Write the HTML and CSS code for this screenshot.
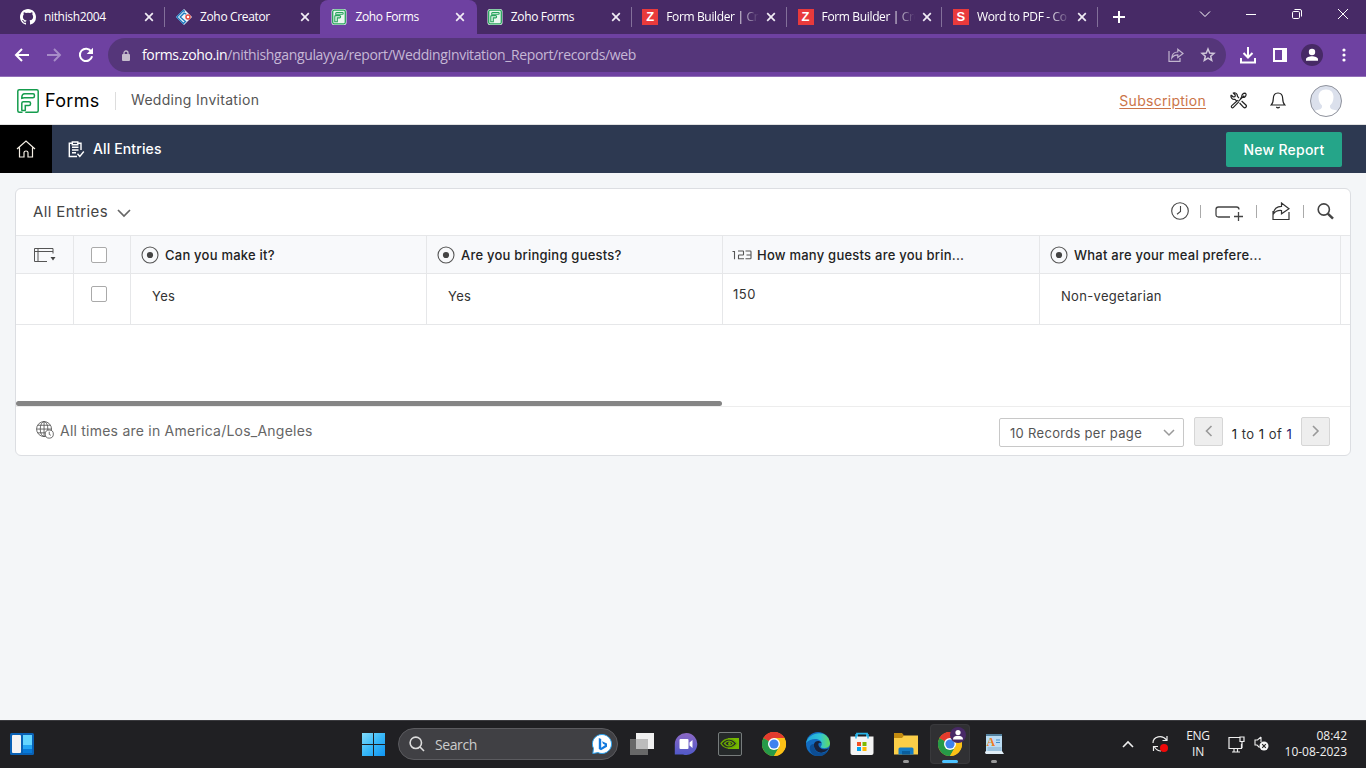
FILE: index.html
```html
<!DOCTYPE html>
<html lang="en">
<head>
<meta charset="utf-8">
<title>Zoho Forms</title>
<link rel="stylesheet" href="styles.css">
</head>
<body>
<svg width="0" height="0" class="defs">
  <defs>
    <symbol id="x" viewBox="0 0 10 10"><path d="M1.2 1.2l7.6 7.6M8.8 1.2L1.2 8.8" stroke="#f1ecf5" stroke-width="1.7" fill="none"/></symbol>
    <symbol id="forms-fav" viewBox="0 0 16 16"><rect width="15" height="16" rx="2.5" x=".5" fill="#e9f7ef"/><rect x="1.7" y="1.2" width="12.6" height="13.6" rx="1.5" fill="none" stroke="#27a35c" stroke-width="1.3"/><path d="M5.5 12.8H3.8V7.5Q3.8 6.6 4.7 6.6H8.6Q9.6 6.6 9.6 7.7T8.6 8.9H6.3v3.9zM5.6 3.5h5.8q.8 0 .8.9t-.8.9H4.6q0-1.8 1-1.8z" fill="none" stroke="#27a35c" stroke-width="1.1"/></symbol>
    <symbol id="radio" viewBox="0 0 18 18"><circle cx="9" cy="9" r="8" fill="none" stroke="#555" stroke-width="1.1"/><circle cx="9" cy="9" r="3.1" fill="#444"/></symbol>
    <symbol id="chrome" viewBox="0 0 24 24"><circle cx="12" cy="12" r="12" fill="#fbc116"/><path d="M12 12L1.6 6A12 12 0 0 1 22.4 6z" fill="#e33b2e"/><path d="M1.6 6A12 12 0 0 0 12 24l5.2-9L12 12z" fill="#269a48"/><path d="M12 6H22.4A12 12 0 0 1 12 24l5.2-9z" fill="#fbc116"/><path d="M1.6 6A12 12 0 0 1 22.4 6H12L7 9z" fill="#e33b2e"/><circle cx="12" cy="12" r="6" fill="#fff"/><circle cx="12" cy="12" r="4.6" fill="#3f82ee"/></symbol>
  </defs>
</svg>

<div class="tabs">
  <div class="tab"><svg class="fav" viewBox="0 0 16 16"><path fill="#fff" d="M8 0C3.58 0 0 3.58 0 8c0 3.54 2.29 6.53 5.47 7.59.4.07.55-.17.55-.38v-1.5c-2.01.37-2.53-.49-2.69-.94-.09-.23-.48-.94-.82-1.13-.28-.15-.68-.52-.01-.53.63-.01 1.08.58 1.23.82.72 1.21 1.87.87 2.33.66.07-.52.28-.87.51-1.07-1.78-.2-3.64-.89-3.64-3.95 0-.87.31-1.59.82-2.15-.08-.2-.36-1.02.08-2.12 0 0 .67-.21 2.2.82a7.6 7.6 0 0 1 4 0c1.53-1.04 2.2-.82 2.2-.82.44 1.1.16 1.92.08 2.12.51.56.82 1.27.82 2.15 0 3.07-1.87 3.75-3.65 3.95.29.25.54.73.54 1.48v2.2c0 .21.15.46.55.38A8 8 0 0 0 16 8c0-4.42-3.58-8-8-8z"/></svg><span class="tab-title">nithish2004</span><svg class="close"><use href="#x"/></svg></div>
  <div class="tab sep"><svg class="fav" viewBox="0 0 16 16"><path d="M8 0l8 8-8 8-8-8z" fill="#edf5fb"/><path d="M8.8 2.6L7.4 1.5.9 8l6.500 6.500L10 12M10.300 5.200L8 4.200 4.200 8l4.600 4" fill="none" stroke="#217bc0" stroke-width="1.400"/><circle cx="12" cy="8" r="2" fill="#fff" stroke="#e54b3f" stroke-width="1.500"/></svg><span class="tab-title">Zoho Creator</span><svg class="close"><use href="#x"/></svg></div>
  <div class="tab active"><svg class="fav"><use href="#forms-fav"/></svg><span class="tab-title">Zoho Forms</span><svg class="close"><use href="#x"/></svg></div>
  <div class="tab"><svg class="fav"><use href="#forms-fav"/></svg><span class="tab-title">Zoho Forms</span><svg class="close"><use href="#x"/></svg></div>
  <div class="tab sep"><span class="fav letter">Z</span><span class="tab-title fade">Form Builder | Cre</span><svg class="close"><use href="#x"/></svg></div>
  <div class="tab sep"><span class="fav letter">Z</span><span class="tab-title fade">Form Builder | Cre</span><svg class="close"><use href="#x"/></svg></div>
  <div class="tab sep"><span class="fav letter">S</span><span class="tab-title fade">Word to PDF - Co</span><svg class="close"><use href="#x"/></svg></div>
  <div class="new-tab sep"><svg width="12" height="12" viewBox="0 0 12 12"><path d="M6 0v12M0 6h12" stroke="#fff" stroke-width="2"/></svg></div>
  <div class="window-controls">
    <svg viewBox="0 0 12 12"><path d="M1 3.500l5 5 5-5" /></svg>
    <svg viewBox="0 0 12 12"><path d="M1 6.500h10"/></svg>
    <svg viewBox="0 0 12 12"><rect x="1.500" y="3.500" width="7" height="7" rx="1.200"/><path d="M3.500 1.500H9q1.500 0 1.500 1.500v5.500"/></svg>
    <svg viewBox="0 0 12 12"><path d="M1 1l10 10M11 1L1 11"/></svg>
  </div>
</div>

<div class="toolbar">
  <div class="nav-icons">
    <svg width="16" height="16" viewBox="0 0 16 16"><path d="M15 8H2.500M8 2L2 8l6 6" stroke="#fff" stroke-width="2" fill="none"/></svg>
    <svg width="16" height="16" viewBox="0 0 16 16"><path d="M1 8h12.500M8 2l6 6-6 6" stroke="#a78cc8" stroke-width="1.900" fill="none"/></svg>
    <svg width="16" height="16" viewBox="0 0 16 16"><path d="M13.300 4.500A6.200 6.200 0 1 0 14.100 9.300" stroke="#fff" stroke-width="2" fill="none"/><path d="M15 .8v6.300H8.700z" fill="#fff"/></svg>
  </div>
  <div class="omnibox">
    <svg width="8" height="11" viewBox="0 0 8 11"><path d="M2 4.500V3a2 2 0 0 1 4 0v1.500" fill="none" stroke="#c5bccd" stroke-width="1.300"/><rect y="4" width="8" height="7" rx="1" fill="#c5bccd"/></svg>
    <span class="url"><b>forms.zoho.in</b>/nithishgangulayya/report/WeddingInvitation_Report/records/web</span>
    <svg width="16" height="16" viewBox="0 0 16 16" fill="none" stroke="#c2b5cf" stroke-width="1.200"><path d="M1 4v10.300h11V11M3.800 11c.2-4 2.400-6 6-6V2.200L15 6.500l-5.200 4V7.800C7 7.800 5.300 8.600 3.800 11z"/></svg>
    <svg width="16" height="16" viewBox="0 0 16 16"><path d="M8 2l1.700 4 4.300.4-3.300 2.800 1 4.300L8 11.200l-3.700 2.300 1-4.300L2 6.400 6.300 6z" fill="none" stroke="#d0c7da" stroke-width="1.500"/></svg>
  </div>
  <div class="tool-icons">
    <svg width="16" height="17" viewBox="0 0 16 17"><path d="M1 11v4.500h14V11M8 0v10M3.500 6L8 10.500 12.500 6" fill="none" stroke="#fff" stroke-width="2"/></svg>
    <svg width="14" height="14" viewBox="0 0 14 14"><path d="M1 1h12v12H1z" fill="none" stroke="#fff" stroke-width="2"/><path d="M9 1h4v12H9z" fill="#fff"/></svg>
    <svg width="22" height="22" viewBox="0 0 22 22"><circle cx="11" cy="11" r="11" fill="#472a66"/><circle cx="11" cy="8" r="3.200" fill="#fff"/><path d="M5 16.800v-1.500c0-2 3.500-3 6-3s6 1 6 3v1.500z" fill="#fff"/></svg>
    <svg width="4" height="14" viewBox="0 0 4 14" fill="#fff"><circle cx="2" cy="2" r="1.600"/><circle cx="2" cy="7" r="1.600"/><circle cx="2" cy="12" r="1.600"/></svg>
  </div>
</div>

<header class="app-header">
  <svg width="22" height="24" viewBox="0 0 22 24" fill="none" stroke="#159c4d" stroke-width="1.500"><path d="M5.500 23.200H2.300Q.8 23.200.8 21.700V2.300Q.8.800 2.300.8h17.400q1.500 0 1.500 1.500v19.400q0 1.500-1.500 1.500H8.300"/><path d="M4.800 21V14.300q0-1.500 1.500-1.500h5.700q1.500 0 1.500 1.500v.8q0 1.500-1.500 1.500H8.300V21q0 .5-.5.500H5.300q-.5 0-.5-.5zM4.800 9.300q-.2-4.500 3-4.500h8.400q1.200 0 1.200 1.200v1.300q0 1.500-1.500 1.500H7.300q-1.200 0-2.500.5z"/></svg>
  <span class="brand">Forms</span>
  <span class="form-name">Wedding Invitation</span>
  <a class="subscription">Subscription</a>
  <svg class="tools" width="17" height="17" viewBox="0 0 17 17" fill="none" stroke="#222" stroke-width="1.200" stroke-linejoin="round"><path d="M1.200 3L3.200 5 5 4.700 5.300 3 3.300 1C5.200.2 7.600 1.700 7.400 4.200l1.500 1.900M1.200 3C.2 5.500 2.500 7.900 5 7.300l2 2.100M9.600 11l4 4.300c1.600 1.300 3.700-.7 2.300-2.300L11.600 9M8.600 9.200L14.200 3.600M10.200 7.400l1.600-2.600c-.3-1.900 1.300-3.700 3.400-3.600l.9 1c0 2-1.600 3.600-3.500 3.100M7.800 8.200l-6 5.400c-1.300 1.300.4 2.900 1.600 1.700L9 9.700"/></svg>
  <svg class="bell" width="16" height="17" viewBox="0 0 16 17" fill="none" stroke="#222" stroke-width="1.200"><path d="M1.200 13h13.600c-2-1.700-2-3.700-2.100-6.500C12.600 3 10.800 1 8 1S3.400 3 3.300 6.500C3.200 9.300 3.200 11.300 1.200 13zM6.300 15q1.700 1.600 3.400 0"/></svg>
  <svg class="avatar" width="32" height="32" viewBox="0 0 32 32"><clipPath id="round"><circle cx="16" cy="16" r="15.500"/></clipPath><g clip-path="url(#round)"><path d="M0 0h32v32H0z" fill="#dbe0ec"/><path d="M16 4.500c-5 0-7.500 3-7.500 7.500 0 4 1.500 7 3.500 8.500.4 3-1.500 4-5 4.500C4.500 25.500 3 27 1 32h30c-2-5-3.500-6.500-6-7-3.500-.5-5.400-1.500-5-4.500 2-1.500 3.500-4.500 3.500-8.500 0-4.500-2.500-7.500-7.500-7.500z" fill="#fff"/></g><circle cx="16" cy="16" r="15.500" fill="none" stroke="#8f929c"/></svg>
</header>

<nav class="nav">
  <div class="home"><svg width="20" height="18" viewBox="0 0 20 18" fill="none" stroke="#f4eee4" stroke-width="1.200"><path d="M1 9l9-8 9 8M3.500 7.500V17H8v-4.500q0-1.500 2-1.500t2 1.500V17h4.500V7.500"/></svg></div>
  <svg class="clip" width="17" height="17" viewBox="0 0 17 17" fill="none" stroke="#fff" stroke-width="1.400"><path d="M4 2.300H1.300v13.200H9M10 2.300h3V9M4.300 1h5.500v2.700H4.300zM4 6.300h6.500M4 9h6.500M4 11.700h4M9.500 12.800l2.300 2.700 4-5"/></svg>
  <span class="nav-title">All Entries</span>
  <div class="new-report">New Report</div>
</nav>

<main class="card">
  <div class="card-top">
    <span class="view-name">All Entries</span>
    <svg class="chev" width="14" height="9" viewBox="0 0 14 9"><path d="M1 1l6 6 6-6" fill="none" stroke="#666" stroke-width="1.700"/></svg>
    <div class="actions">
      <svg width="18" height="18" viewBox="0 0 18 18" fill="none" stroke="#444" stroke-width="1.100"><circle cx="9" cy="9" r="8.300"/><path d="M9.500 4v5.500L6 12.300"/></svg>
      <i></i>
      <svg width="28" height="18" viewBox="0 0 28 18" fill="none" stroke="#444" stroke-width="1.300"><path d="M15 13H3.500Q1 13 1 10.500v-5Q1 3 3.500 3h18Q24 3 24 5.500M23.500 8v9M19 12.500h9"/></svg>
      <i></i>
      <svg width="18" height="18" viewBox="0 0 18 18" fill="none" stroke="#333" stroke-width="1.200"><path d="M2 9.500H1v8h16V10M1.500 12C1.500 7 5 4.300 9.500 4.300V1L17 6.800l-7.500 5V8.500C6 8.200 3.500 9 1.500 12z"/></svg>
      <i></i>
      <svg width="17" height="17" viewBox="0 0 17 17" fill="none" stroke="#444"><circle cx="6.800" cy="6.500" r="5.600" stroke-width="1.600"/><path d="M10.800 10.600l5.200 5" stroke-width="2.500"/></svg>
    </div>
  </div>
  <div class="grid head">
    <div class="center"><svg width="22" height="15" viewBox="0 0 22 15" fill="none" stroke="#555"><path d="M13 14.500H.500v-13h18.500v5M.500 4.500h18.500M4 1v13" /><path d="M16.500 10h5L19 13.500z" fill="#444" stroke="none"/></svg></div>
    <div class="center box"><span class="check"></span></div>
    <div class="col"><svg class="radio"><use href="#radio"/></svg>Can you make it?</div>
    <div class="col"><svg class="radio"><use href="#radio"/></svg>Are you bringing guests?</div>
    <div class="col number"><svg width="20" height="10" viewBox="0 0 20 10" fill="none" stroke="#555" stroke-width="1.100"><path d="M.5 1.500h2V9.300M6 1h5q.5 0 .5.500v3q0 .500-.5.500H7q-.5 0-.5.500v3.200h5.500M13.500 1h4.700q.8 0 .8.800v6.100q0 .8-.8.800h-4.700M14.500 5H19"/></svg>How many guests are you brin...</div>
    <div class="col"><svg class="radio"><use href="#radio"/></svg>What are your meal prefere...</div>
    <div></div>
  </div>
  <div class="grid row">
    <div></div>
    <div class="center box"><span class="check"></span></div>
    <div class="cell">Yes</div>
    <div class="cell">Yes</div>
    <div class="cell value">150</div>
    <div class="cell">Non-vegetarian</div>
    <div></div>
  </div>
  <div class="scroll-area"><div class="scrollbar"></div></div>
  <footer class="card-foot">
    <svg class="globe" width="18" height="18" viewBox="0 0 19 19" fill="none" stroke="#555" stroke-width=".9"><circle cx="8.500" cy="8.500" r="7.900"/><ellipse cx="8.500" cy="8.500" rx="4" ry="7.900"/><path d="M8.500.6v15.800M.6 8.500h15.800M2 4.500h13M2 12.500h11"/><circle cx="14" cy="13.800" r="4.300" fill="#fff"/><path d="M14 11.300v2.900l1.700.9"/></svg>
    <span class="times">All times are in America/Los_Angeles</span>
    <div class="select"><span>10 Records per page</span><svg width="12" height="8" viewBox="0 0 12 8"><path d="M1 1l5 5 5-5" fill="none" stroke="#999" stroke-width="1.500"/></svg></div>
    <div class="page-btn"><svg width="8" height="12" viewBox="0 0 8 12"><path d="M6.500 1l-5 5 5 5" fill="none" stroke="#999" stroke-width="1.600"/></svg></div>
    <span class="page-info"><b>1</b> to <b>1</b> of <b>1</b></span>
    <div class="page-btn"><svg width="8" height="12" viewBox="0 0 8 12"><path d="M1 1l5 5-5 5" fill="none" stroke="#999" stroke-width="1.600"/></svg></div>
  </footer>
</main>

<div class="taskbar">
  <svg class="widgets" width="24" height="22" viewBox="0 0 24 22"><rect width="24" height="22" rx="1.500" fill="#0961b5"/><rect x="2" y="2" width="9" height="18" rx="1" fill="#f4f4f4"/><path d="M13 2h9v10h-9z" fill="#63d5ff"/><path d="M13 12h9v4h-9z" fill="#22a5f4"/><path d="M13 16h9v4h-9z" fill="#0779d8"/></svg>
  <svg class="start" width="23" height="23" viewBox="0 0 23 23"><defs><linearGradient id="win" x1="0" y1="0" x2="1" y2="1"><stop stop-color="#82dcfb"/><stop offset=".5" stop-color="#38b8f8"/><stop offset="1" stop-color="#0f94f2"/></linearGradient></defs><path d="M0 0h11v11H0zM12 0h11v11H12zM0 12h11v11H0zM12 12h11v11H12z" fill="url(#win)"/></svg>
  <div class="search">
    <svg width="16" height="16" viewBox="0 0 16 16" fill="none" stroke="#ddd" stroke-width="1.600"><circle cx="6.800" cy="6.800" r="5.700"/><path d="M11 11l4 4"/></svg>
    <span>Search</span>
    <svg width="20" height="20" viewBox="0 0 20 20"><path d="M10 .5a9.500 9.500 0 1 1-4 18.100L.8 19.500l.7-5A9.500 9.500 0 0 1 10 .5z" fill="#fff" stroke="#2aa0ed"/><path d="M6.800 4l2.400 1v8.700l4-2.600-2.200-1.300L10 7.300l5 2.200v3.300L9 16.200 6.800 15z" fill="#1279de"/></svg>
  </div>
  <div class="apps">
    <div><svg width="24" height="22" viewBox="0 0 24 22"><path d="M6 0h18v16H6z" fill="#f0f0f0"/><path d="M0 6h18v16H0z" fill="#686868"/><path d="M6 6h12v10H6z" fill="#bcbcbc"/></svg></div>
    <div><svg width="24" height="24" viewBox="0 0 24 24"><defs><linearGradient id="chat" x2="0" y2="1"><stop stop-color="#8c68c4"/><stop offset="1" stop-color="#5059c9"/></linearGradient></defs><path d="M12.500 1A11 11 0 1 1 9 22.500H.8V12A11.500 11.500 0 0 1 12.500 1z" fill="url(#chat)"/><rect x="5.500" y="7" width="9" height="10" rx="1" fill="#fff"/><path d="M15.500 10.500l3-2.500v8l-3-2.500z" fill="#fff"/></svg></div>
    <div><svg width="24" height="24" viewBox="0 0 24 24"><rect x=".5" y=".5" width="23" height="23" rx="1.500" fill="#25292a" stroke="#777c7c"/><path d="M10 6h11v11H10z" fill="#76b900"/><path d="M3 11.500C7 6 14 5 19 11.500 15 17 7 18 3 11.500zM6.500 11.500c2.500-3 6-3.500 9 0-3 3-6 3.500-9 0z" fill="#232829" stroke="#6ba800" stroke-width="1.300"/><circle cx="11.500" cy="11.500" r="1.500" fill="#6ba800"/></svg></div>
    <div><svg width="24" height="24"><use href="#chrome"/></svg></div>
    <div><svg width="24" height="24" viewBox="0 0 24 24"><defs><linearGradient id="edge"><stop stop-color="#22a4df"/><stop offset=".6" stop-color="#2fc3d4"/><stop offset="1" stop-color="#65dc5b"/></linearGradient></defs><circle cx="12" cy="12" r="12" fill="#126bc0"/><path d="M0 11C2 0 22-4 24 11c.2 5-5 6-9 4.500-1-.5 1-1.500.8-4C15.500 6 5 5 0 11z" fill="url(#edge)"/><path d="M8 12c1-3 5-4.500 7.500-1-3-1-4 1-2.500 3.500 2 3.500 7 3.500 10 1.500-5 8-16 5-15-4z" fill="#18223b"/><path d="M8 12c-1 9 9 12 14 6C18 27 6 26 4 18c-1-4 1-6 4-6z" fill="#0c4d93"/></svg></div>
    <div><svg width="24" height="24" viewBox="0 0 24 24"><path d="M7 5V1.700h10V5" fill="none" stroke="#29b5ea" stroke-width="1.800"/><path d="M.5 4.500h23V21q0 2-2 2h-19q-2 0-2-2z" fill="#f4f4f4"/><path d="M6 6.500V2M18 6.500V2" stroke="#29b5ea" stroke-width="1.500"/><path d="M7 10h4v4H7z" fill="#f25022"/><path d="M12.500 10h4v4h-4z" fill="#7fba00"/><path d="M7 15h4v4H7z" fill="#00a4ef"/><path d="M12.500 15h4v4h-4z" fill="#ffb900"/></svg></div>
    <div class="running"><svg width="24" height="24" viewBox="0 0 24 24"><path d="M0 1h8l2 2.500V9H0z" fill="#c28a0f"/><path d="M0 6h8l2-2.500h14V22.500H0z" fill="#fbce48"/><path d="M4.500 22.500V17q0-1.500 1.500-1.500h12q1.500 0 1.500 1.500v5.500z" fill="#147bc4"/><path d="M8 19h8v3.500H8z" fill="#0a5e9d"/></svg></div>
    <div class="running current"><svg width="24" height="24"><use href="#chrome"/></svg><svg class="badge" width="16" height="16" viewBox="0 0 16 16"><circle cx="8" cy="8" r="8" fill="#482967"/><circle cx="8" cy="5.500" r="2.600" fill="#fff"/><path d="M3 12.500q0-3.700 5-3.700t5 3.700z" fill="#fff"/></svg></div>
    <div class="running"><svg width="20" height="24" viewBox="0 0 20 24"><path d="M2 2h16v19H2z" fill="#badcf3"/><path d="M2 2h16v2H2z" fill="#53819e"/><path d="M12 8h4M12 10.500h4" stroke="#418bca"/><path d="M3.500 16h14M3.500 18h14" stroke="#7ea9ca"/><path d="M2 19h16l2 3H2q-2-1.500 0-3z" fill="#e1eef7"/><text x="2.500" y="14" class="wordpad">A</text></svg></div>
  </div>
  <div class="tray">
    <svg width="12" height="8" viewBox="0 0 12 8"><path d="M1 7l5-5 5 5" fill="none" stroke="#eee" stroke-width="1.600"/></svg>
    <svg class="sync" width="17" height="18" viewBox="0 0 17 18" fill="none" stroke="#eee" stroke-width="1.200"><path d="M1 8C1 1.500 10-1 14.500 5M15 1v4.500h-4.500M9 16q-4 0-6.500-4M1.500 16v-4.500H6"/><circle cx="12" cy="13" r="4" fill="#f00808" stroke="none"/></svg>
    <div class="lang">ENG<br>IN</div>
    <svg class="monitor" width="17" height="17" viewBox="0 0 17 17" fill="none" stroke="#eee" stroke-width="1.200"><path d="M11.500 1.500H1v11h12.500V8M4 16h8M6 12.500V16M9.500 12.500V16M12 1h4v4.500h-4zM14 5.500V12"/></svg>
    <svg class="sound" width="16" height="16" viewBox="0 0 16 16" fill="none" stroke="#eee" stroke-width="1.100"><path d="M7 1L3.500 4H1v5h2l2.500 2.500M7 1v5"/><circle cx="10" cy="10" r="4.500" fill="#f5f5f5" stroke="none"/><path d="M8.200 8.200l3.600 3.600M11.800 8.200l-3.600 3.600" stroke="#222"/></svg>
    <div class="clock">08:42<br>10-08-2023</div>
  </div>
</div>
</body>
</html>
```
FILE: styles.css
```css
* { box-sizing: border-box; }
body {
  margin: 0;
  width: 1366px;
  height: 768px;
  overflow: hidden;
  display: flex;
  flex-direction: column;
  background: #f4f6f8;
  font-family: Inter, "Liberation Sans", sans-serif;
  color: #333;
}
svg { display: block; flex: none; }
.defs { position: absolute; }

/* Browser chrome */
.tabs {
  height: 34px;
  padding-left: 9px;
  background: #472a66;
  display: flex;
  font-family: "Open Sans", sans-serif;
}
.tab {
  width: 155.400px;
  height: 34px;
  display: flex;
  align-items: center;
  padding: 0 9px 0 11.600px;
  color: #fff;
}
.tab:first-child { padding-left: 11px; }
.sep {
  background: linear-gradient(#83709a, #83709a) 0 7px / 1px 20px no-repeat;
}
.active {
  background: #6e41a1;
  border-radius: 8px 8px 0 0;
  width: 157px;
  margin-right: -1.600px;
}
.fav { width: 16px; height: 16px; flex: none; margin-right: 8px; }
.letter {
  background: #e93a3c;
  color: #fff;
  font: bold 13px/16px "Liberation Sans", sans-serif;
  text-align: center;
}
.tab-title {
  width: 94px;
  white-space: nowrap;
  font-size: 12px;
  line-height: 18px;
  letter-spacing: -0.350px;
}
.fade {
  -webkit-mask-image: linear-gradient(90deg, #000 76%, transparent 99%);
  mask-image: linear-gradient(90deg, #000 76%, transparent 99%);
}
.close { width: 10px; height: 10px; margin-left: 6px; }
.new-tab { padding: 11px 0 0 16px; width: 90px; }
.window-controls { display: flex; gap: 34px; padding-top: 8px; margin-left: 12px; }
.window-controls svg { width: 12px; height: 12px; fill: none; stroke: #fff; stroke-width: 1; }

.toolbar {
  height: 43px;
  background: #6e41a1;
  border-bottom: 1px solid #9270b8;
  display: flex;
  align-items: center;
}
.nav-icons { display: flex; gap: 16px; padding-left: 14px; width: 108px; }
.omnibox {
  width: 1118px;
  height: 34px;
  border-radius: 17px;
  background: #55367a;
  display: flex;
  align-items: center;
  padding: 0 10px 0 14px;
}
.url {
  flex: 1;
  margin-left: 12px;
  color: #c6b8d6;
  font: 14px/20px "Open Sans", sans-serif;
  letter-spacing: -0.360px;
}
.url b { color: #fff; font-weight: 400; }
.omnibox svg + svg { margin-left: 16px; }
.tool-icons { display: flex; align-items: center; padding-left: 14px; }
.tool-icons svg:nth-child(2) { margin-left: 17px; }
.tool-icons svg:nth-child(3) { margin-left: 14px; }
.tool-icons svg:nth-child(4) { margin-left: 19px; }

/* Application header */
.app-header {
  height: 48px;
  background: #fff;
  border-bottom: 1px solid #e2e2e2;
  display: flex;
  align-items: center;
  padding: 0 24px 0 17px;
}
.brand { margin-left: 6px; width: 70px; font-size: 18px; line-height: 24px; color: #000; letter-spacing: 0.300px; }
.form-name {
  border-left: 1px solid #ddd;
  padding: 0 0 2px 15px;
  font-size: 14px;
  line-height: 16px;
  letter-spacing: 0.300px;
  color: #555;
  flex: 1;
}
.subscription { font-size: 14px; letter-spacing: 0.280px; color: #cb7448; text-decoration: underline; text-underline-offset: 2px; }
.tools { margin-left: 24px; }
.bell { margin-left: 23px; }
.avatar { margin-left: 24px; }

.nav {
  height: 48px;
  background: #2d3951;
  display: flex;
  align-items: center;
  color: #fff;
  font-size: 14px;
  font-weight: 500;
}
.home { width: 52px; height: 48px; background: #000; display: flex; align-items: center; justify-content: center; }
.clip { margin-left: 16px; }
.nav-title { margin: -1px 0 0 8px; flex: 1; letter-spacing: 0.120px; }
.new-report {
  width: 116px;
  height: 35px;
  margin: 0 24px 0 0;
  border-radius: 2px;
  background: #25a589;
  line-height: 36px;
  text-align: center;
  letter-spacing: 0.250px;
}

/* Report card */
.card {
  width: 1336px;
  height: 268px;
  margin: 15px 0 264px 15px;
  background: #fff;
  border: 1px solid #dcdee2;
  border-radius: 6px;
}
.card-top { height: 46px; display: flex; align-items: center; padding: 0 16px 0 17px; }
.view-name { margin-top: -1px; font-size: 15px; letter-spacing: 0.380px; color: #444; width: 84px; white-space: nowrap; }
.chev { margin-top: 2px; }
.actions { margin: -2px 0 0 auto; display: flex; align-items: center; }
.actions i { width: 1px; height: 13px; background: #aaa; }
.actions svg:nth-of-type(1) { margin-right: 11px; }
.actions svg:nth-of-type(2) { margin: 3px 13px 0 14px; }
.actions svg:nth-of-type(3) { margin: 0 13px 0 15px; }
.actions svg:nth-of-type(4) { margin-left: 13px; }

.grid { display: grid; grid-template-columns: 58px 57px 296px 296px 317px 301px 9px; }
.grid > div { border-right: 1px solid #e6e7e9; }
.grid > div:last-child { border-right: 0; }
.head {
  height: 39px;
  border-top: 1px solid #e6e7e9;
  border-bottom: 1px solid #e6e7e9;
  background: #f8f9fb;
  color: #222;
  font-size: 13px;
  font-weight: 500;
  letter-spacing: 0.230px;
}
.center { display: flex; align-items: center; justify-content: center; }
.grid > .box { padding-right: 6px; }
.check { width: 16px; height: 16px; border: 1px solid #aaa; border-radius: 2px; background: #fff; }
.col { display: flex; align-items: center; padding: 1px 0 0 10px; white-space: nowrap; }
.radio { width: 18px; height: 18px; margin-right: 6px; }
.number { padding-left: 9px; }
.number svg { margin-right: 5px; }
.row { height: 51px; border-bottom: 1px solid #e6e7e9; font-size: 13px; letter-spacing: 0.320px; color: #333; }
.row .center { align-items: flex-start; padding-top: 12px; }
.cell { padding: 13px 0 0 21px; line-height: 18px; }
.value { padding: 11px 0 0 10px; letter-spacing: 0.500px; }
.scroll-area { height: 82px; border-bottom: 1px solid #ededed; display: flex; align-items: flex-end; }
.scrollbar { width: 706px; height: 5px; border-radius: 3px; background: #858585; }
.card-foot { height: 48px; display: flex; align-items: center; padding: 0 20px; font-size: 14px; }
.globe { margin-top: -3px; }
.times { margin: -1px auto 0 6px; font-size: 14px; letter-spacing: 0.230px; color: #666; }
.select {
  width: 185px;
  height: 29px;
  margin: 3px 10px 0 0;
  border: 1px solid #c8c8c8;
  border-radius: 2px;
  display: flex;
  align-items: center;
  justify-content: space-between;
  padding: 0 8px 0 10px;
  font-size: 13px;
  letter-spacing: 0.300px;
  color: #555;
}
.page-btn {
  width: 29px;
  height: 29px;
  border: 1px solid #d6d6d6;
  border-radius: 2px;
  background: #eee;
  display: flex;
  align-items: center;
  justify-content: center;
}
.page-info { width: 78px; margin-top: 6px; text-align: center; font-size: 13px; letter-spacing: 0.500px; white-space: nowrap; }
.page-info b { font-weight: 400; color: #222; }
.page-info b:last-child { color: #22206c; }

/* Desktop taskbar */
.taskbar {
  height: 48px;
  flex: none;
  background: #202023;
  border-top: 1px solid #3a3a3e;
  display: flex;
  align-items: center;
  padding-bottom: 1px;
  font-family: "Open Sans", sans-serif;
}
.widgets { margin-left: 10px; }
.start { margin-left: 328px; }
.search {
  width: 220px;
  height: 32px;
  margin: 0 2px 0 13px;
  border: 1px solid #5b5b5f;
  border-radius: 16px;
  background: #404044;
  display: flex;
  align-items: center;
  padding: 0 5px 0 10px;
}
.search span { flex: 1; margin-left: 10px; font-size: 14px; letter-spacing: -0.400px; color: #ccc; }
.apps { display: flex; }
.apps > div {
  position: relative;
  width: 40px;
  height: 40px;
  margin-right: 4px;
  border-radius: 4px;
  display: flex;
  align-items: center;
  justify-content: center;
}
.apps > div:first-child { margin-left: 2px; }
.running::after {
  content: "";
  position: absolute;
  bottom: 1px;
  left: 17px;
  width: 6px;
  height: 3px;
  border-radius: 2px;
  background: #999;
}
.current { background: #303033; outline: 1px solid #39393c; outline-offset: -1px; }
.current::after { left: 12px; width: 16px; background: #4cc2ff; }
.badge { position: absolute; right: 4px; top: 3px; }
.wordpad { font: bold 12px "Liberation Serif", serif; fill: #ee7c24; }
.tray { margin-left: auto; display: flex; align-items: center; color: #f0f0f0; font-size: 12px; line-height: 16px; padding-right: 19px; }
.sync { margin-left: 18px; }
.lang { margin-left: 13px; width: 32px; text-align: center; letter-spacing: -0.300px; }
.monitor { margin-left: 14px; }
.sound { margin-left: 9px; }
.clock { width: 77px; text-align: right; letter-spacing: -0.020px; }
```
